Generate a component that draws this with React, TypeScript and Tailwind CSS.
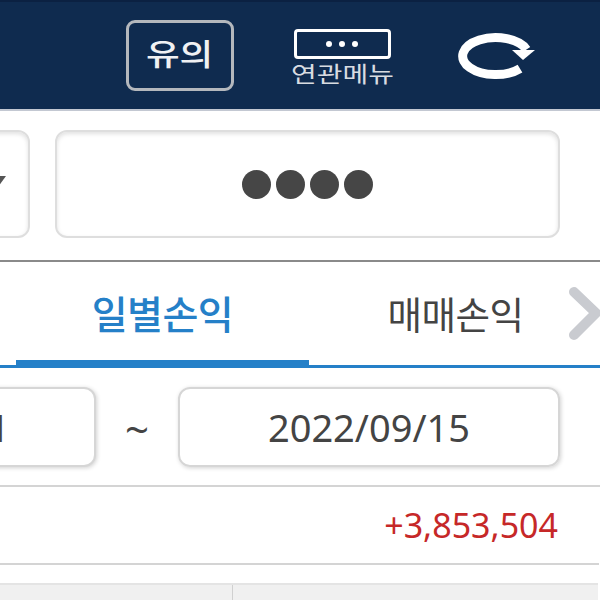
export default function App() {
  const font = { fontFamily: '"Noto Sans", "Noto Sans CJK KR", sans-serif' };
  return (
    <div className="w-[600px] h-[600px] overflow-hidden bg-white flex flex-col" style={font}>
      <header className="h-[111px] shrink-0 bg-[#0f2b4f] border-t-2 border-t-[#0b2142] border-b-2 border-b-[#c3c8d2] flex items-center pl-[126px]">
        <div className="w-[108px] h-[71px] mt-[-1px] rounded-[9px] border-[3px] border-[#b4b8bd] flex items-center justify-center text-[#f0f1f3] text-[30px] font-medium leading-none pb-[2px]">
          <span className="inline-block scale-x-[1.22] whitespace-nowrap">유의</span>
        </div>
        <div className="ml-[56px] w-[104px] flex flex-col items-center mt-[2px]">
          <div className="w-[97px] h-[30px] rounded-[4px] border-[3px] border-white flex items-center justify-center gap-[7px]">
            <span className="w-[6px] h-[6px] rounded-full bg-white" />
            <span className="w-[6px] h-[6px] rounded-full bg-white" />
            <span className="w-[6px] h-[6px] rounded-full bg-white" />
          </div>
          <div className="text-[#d8dce1] text-[22px] leading-[22px] mt-[3px] whitespace-nowrap scale-x-[1.27]">연관메뉴</div>
        </div>
        <svg className="ml-[56px] shrink-0" width="90" height="60" viewBox="0 0 90 60">
          <path d="M70 42.6 A 33 18.5 0 1 1 76.5 23.5" fill="none" stroke="white" strokeWidth="9" />
          <path d="M62 24 L85 24 L73 34 Z" fill="white" />
        </svg>
      </header>

      <div className="h-[151px] shrink-0 border-b-2 border-b-[#8a8a8a] flex items-start pt-[19px] pl-[55px] relative">
        <div className="absolute left-[-60px] top-[19px] w-[90px] h-[108px] rounded-[12px] border-2 border-[#dedede] bg-white shadow-[inset_0_2px_4px_rgba(0,0,0,0.12)]">
          <div className="absolute right-[22px] top-[44px] w-0 h-0 border-l-[8px] border-r-[8px] border-t-[11px] border-l-transparent border-r-transparent border-t-[#555]" />
        </div>
        <div className="w-[505px] h-[108px] rounded-[12px] border-2 border-[#dedede] shadow-[inset_0_2px_4px_rgba(0,0,0,0.12)] flex items-center justify-center gap-[5px]">
          <span className="w-[29px] h-[29px] rounded-full bg-[#464646]" />
          <span className="w-[29px] h-[29px] rounded-full bg-[#464646]" />
          <span className="w-[29px] h-[29px] rounded-full bg-[#464646]" />
          <span className="w-[29px] h-[29px] rounded-full bg-[#464646]" />
        </div>
      </div>

      <div className="h-[106px] shrink-0 border-b-[3px] border-b-[#2580c8] flex">
        <div className="ml-[16px] w-[293px] h-[106px] shrink-0 border-b-[8px] border-b-[#2580c8] flex items-center justify-center text-[#2580c8] text-[39px] font-medium tracking-[-0.5px] leading-none pt-[5px]">일별손익</div>
        <div className="w-[293px] h-[103px] shrink-0 flex items-center justify-center text-[#444] text-[37.5px] leading-none tracking-[-0.5px] pt-[3px]">매매손익</div>
        <svg className="mt-[25px] ml-[-34px] shrink-0" width="40" height="56" viewBox="0 0 40 56">
          <path d="M6 5 L28 26 L6 48" fill="none" stroke="#c9cbd0" strokeWidth="10" strokeLinecap="round" strokeLinejoin="round" />
        </svg>
      </div>

      <div className="h-[119px] shrink-0 border-b-2 border-b-[#d4d4d4] relative flex items-start pt-[19px] pl-[178px]">
        <div className="absolute left-[-60px] top-[19px] w-[156px] h-[80px] rounded-[12px] border-2 border-[#d6d6d6] shadow-[1px_1px_4px_rgba(0,0,0,0.18)] bg-white flex items-center justify-end text-[38px] text-[#444] pr-[84px]">1</div>
        <span className="absolute left-[125px] top-[37px] text-[#444] text-[42px] leading-[48px]">~</span>
        <div className="w-[382px] h-[80px] rounded-[12px] border-2 border-[#d6d6d6] shadow-[1px_1px_4px_rgba(0,0,0,0.18)] flex items-center justify-center text-[38px] text-[#444] leading-none">2022/09/15</div>
      </div>

      <div className="h-[78px] shrink-0 border-b-2 border-b-[#d4d4d4] w-[599px] flex items-center justify-end pr-[41px] text-[#c62828] text-[34px] leading-none">+3,853,504</div>

      <div className="mt-[18px] flex-1 w-[598px] grid grid-cols-[233px_1fr] bg-[#f0f0f0] border-t-2 border-t-[#e4e4e4]">
        <div className="border-r border-r-[#d0d0d0]" />
        <div />
      </div>
    </div>
  );
}
